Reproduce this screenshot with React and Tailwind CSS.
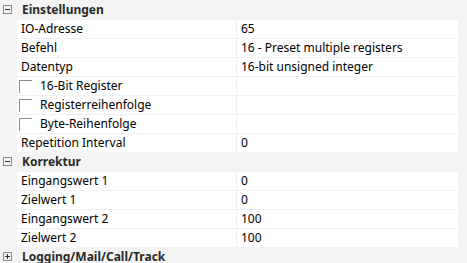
import React from "react";

const SECTIONS = [
  {
    title: "Einstellungen",
    open: true,
    rows: [
      { label: "IO-Adresse", value: "65" },
      { label: "Befehl", value: "16 - Preset multiple registers" },
      { label: "Datentyp", value: "16-bit unsigned integer" },
      { label: "16-Bit Register", value: "", check: true },
      { label: "Registerreihenfolge", value: "", check: true },
      { label: "Byte-Reihenfolge", value: "", check: true },
      { label: "Repetition Interval", value: "0" },
    ],
  },
  {
    title: "Korrektur",
    open: true,
    rows: [
      { label: "Eingangswert 1", value: "0" },
      { label: "Zielwert 1", value: "0" },
      { label: "Eingangswert 2", value: "100" },
      { label: "Zielwert 2", value: "100" },
    ],
  },
  { title: "Logging/Mail/Call/Track", open: false, rows: [] },
];

function Expander({ open }) {
  return (
    <svg width="9" height="9" viewBox="0 0 9 9" className="shrink-0">
      <rect x="0.5" y="0.5" width="8" height="8" fill="none" stroke="#8c8c8c" />
      <line x1="2" y1="4.5" x2="7" y2="4.5" stroke="#333" />
      {!open && <line x1="4.5" y1="2" x2="4.5" y2="7" stroke="#333" />}
    </svg>
  );
}

function Checkbox() {
  return (
    <span className="block w-[13px] h-[13px] border-t border-l border-[#8a8a8a] shrink-0" />
  );
}

export default function App() {
  return (
    <div
      className="w-[467px] h-[263px] overflow-hidden bg-[#f3f3f3] text-[12px] text-black"
      style={{ fontFamily: '"Noto Sans", "Open Sans", sans-serif' }}
    >
      {SECTIONS.map((s) => (
        <div key={s.title}>
          {/* section header */}
          <div className="h-[19px] flex items-center pl-[3px]">
            <Expander open={s.open} />
            <span className="ml-[10px] font-bold text-[#2a2a2a]">{s.title}</span>
          </div>

          {s.rows.map((r) => (
            <div key={r.label} className="h-[19px] flex">
              <div className="w-[17px] shrink-0" />
              <div className="w-[441px] flex bg-white border-t border-[#f0f0f0]">
                <div className="w-[220px] flex items-center border-r border-[#f0f0f0] pl-[4px]">
                  {r.check && (
                    <span className="ml-[-2px] mr-[8px]">
                      <Checkbox />
                    </span>
                  )}
                  <span>{r.label}</span>
                </div>
                <div className="flex-1 flex items-center pl-[4px]">{r.value}</div>
              </div>
            </div>
          ))}
        </div>
      ))}
    </div>
  );
}
